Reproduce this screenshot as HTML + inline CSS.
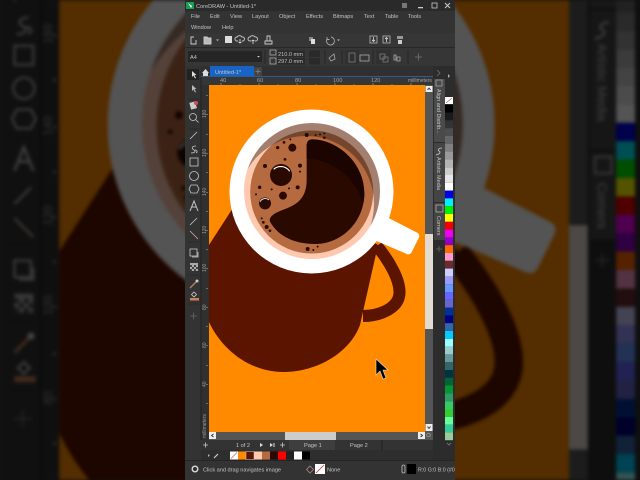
<!DOCTYPE html>
<html><head><meta charset="utf-8"><title>CoreDRAW</title>
<style>html,body{margin:0;padding:0;background:#111;width:640px;height:480px;overflow:hidden}
#w{position:absolute;left:0;top:0;width:640px;height:480px;overflow:hidden;contain:strict}
svg{display:block;overflow:hidden}
text{font-family:"Liberation Sans",sans-serif;font-size:5.6px;fill:#c4c4c4}</style></head>
<body><div id="w">
<svg xmlns="http://www.w3.org/2000/svg" width="640" height="480" viewBox="0 0 640 480">
<defs>
<filter id="b" filterUnits="userSpaceOnUse" x="0" y="0" width="640" height="480" color-interpolation-filters="sRGB"><feGaussianBlur stdDeviation="1.8"/><feComponentTransfer><feFuncR type="linear" slope=".33"/><feFuncG type="linear" slope=".33"/><feFuncB type="linear" slope=".33"/></feComponentTransfer></filter>
<filter id="s" filterUnits="userSpaceOnUse" x="185" y="0" width="270" height="480" color-interpolation-filters="sRGB"><feGaussianBlur stdDeviation="0.3"/></filter>
<clipPath id="win"><rect x="185" y="0" width="270" height="480"/></clipPath>
<clipPath id="page"><rect x="209" y="85" width="216" height="347"/></clipPath>
<clipPath id="inner"><circle cx="312" cy="191" r="68"/></clipPath>
<pattern id="bgp" patternUnits="userSpaceOnUse" x="0" y="0" width="640" height="480"><use href="#app" transform="translate(-434,-327) scale(2.36)"/></pattern>
<g id="app" clip-path="url(#win)">
<rect x="185" y="0" width="270" height="480" fill="#333"/>
<!-- title -->
<rect x="185" y="0" width="270" height="11" fill="#2a2a2a"/>
<rect x="186" y="2" width="8" height="7" fill="#15a052"/><path d="M188 3l4 3-1 2z" fill="#fff"/>
<text x="196" y="8" fill="#bbb">CoreDRAW - Untitled-1*</text>
<rect x="402" y="3" width="5" height="5" fill="#777"/><rect x="418" y="7" width="5" height="1.3" fill="#ccc"/>
<rect x="432" y="3" width="5" height="5" fill="none" stroke="#ccc" stroke-width=".8"/><path d="M445 3l5 5m0-5l-5 5" stroke="#ccc"/>
<!-- menu -->
<text x="191" y="18">File</text><text x="210" y="18">Edit</text><text x="230" y="18">View</text><text x="252" y="18">Layout</text><text x="279" y="18">Object</text><text x="306" y="18">Effects</text><text x="333" y="18">Bitmaps</text><text x="364" y="18">Text</text><text x="385" y="18">Table</text><text x="408" y="18">Tools</text>
<text x="191" y="29">Window</text><text x="222" y="29">Help</text>
<!-- toolbar -->
<rect x="185" y="33" width="270" height="14" fill="#363636"/>
<g fill="none" stroke="#ccc" stroke-width=".9">
<path d="M194 37h-3v7h5v-4"/>
<path d="M204 37h3l1 1h3v6h-7z" fill="#bbb"/>
<rect x="225" y="36" width="7" height="7" fill="#ddd" stroke="none"/>
<path d="M238 41h-1a2 2 0 0 1 0-4 3 3 0 0 1 5 0 2 2 0 0 1 1 4h-1m-2-2v4m-1.500-1l1.500 1 1.500-1"/>
<path d="M251 41h-1a2 2 0 0 1 0-4 3 3 0 0 1 5 0 2 2 0 0 1 1 4h-1m-2 3v-4m-1.500 1l1.500-1 1.500 1"/>
<path d="M265 44v-3h7v3zM267 41v-5h3v5"/>
<path d="M331 37a4 4 0 1 1-4 2m0-2v2.500h2.500" stroke="#aaa"/>
<rect x="370" y="36" width="7" height="7" stroke="#aaa"/><path d="M373.500 37v4m-1.500-1l1.500 1.500 1.500-1.500"/>
<rect x="383" y="36" width="7" height="7" stroke="#aaa"/><path d="M386.500 42v-4m-1.500 1l1.500-1.500 1.500 1.500"/>
</g>
<rect x="309" y="37" width="4" height="4" fill="#888"/><rect x="311" y="39" width="4" height="5" fill="#ddd"/>
<rect x="397" y="36" width="6" height="3" fill="#999"/><rect x="398" y="40" width="4" height="4" fill="#ccc"/>
<path d="M216 39.500h3l-1.500 1.500zM337 39.500h3l-1.500 1.500z" fill="#bbb"/>
<rect x="185" y="47" width="270" height="1" fill="#272727"/>
<!-- property bar -->
<rect x="185" y="48" width="270" height="18" fill="#363636"/>
<rect x="188" y="51" width="74" height="11" fill="#252525"/><text x="190" y="59" fill="#aaa">A4</text><path d="M257 56h3l-1.500 1.500z" fill="#ccc"/>
<g fill="none" stroke="#aaa" stroke-width=".8"><rect x="270" y="50" width="6" height="5"/><rect x="270" y="58" width="6" height="6"/>
<rect x="349" y="53" width="6" height="9" stroke="#ccc"/><rect x="360" y="55" width="9" height="6" stroke="#aaa"/>
<path d="M329 58l5-4 1 5-4 2z"/><rect x="380" y="54" width="5" height="5" stroke="#ccc"/><rect x="383" y="57" width="5" height="5" stroke="#ccc"/>
<path d="M394 60v-5h2v5zm3 1v-4h3v4z"/></g>
<rect x="277" y="50.500" width="28" height="6.500" fill="#2a2a2a"/><rect x="277" y="58" width="28" height="6.500" fill="#2a2a2a"/>
<rect x="309" y="50.500" width="11" height="6.500" fill="#2a2a2a"/><rect x="309" y="58" width="11" height="6.500" fill="#2a2a2a"/>
<text x="278" y="55.800">210.0 mm</text><text x="278" y="63.200">297.0 mm</text>
<path d="M265 50v14M325 50v14M342 50v14M373 50v14M408 50v14" stroke="#262626"/>
<rect x="345" y="50" width="14" height="14" fill="#2a2a2a" opacity=".5"/><rect x="376" y="50" width="15" height="14" fill="#2a2a2a" opacity=".5"/>
<path d="M415 57h7m-3.500-3.500v7" stroke="#666"/>
<!-- tabs -->
<rect x="185" y="66" width="270" height="11" fill="#303030"/>
<path d="M202 73l3.500-4 3.500 4h-1v3h-5v-3z" fill="#ddd"/>
<rect x="210" y="66" width="44" height="10.500" fill="#1763c6"/><text x="215" y="74" fill="#9fd0ff">Untitled-1*</text>
<rect x="254" y="67" width="8" height="9" fill="#444"/><path d="M255.500 71.500h5m-2.500-2.500v5" stroke="#777"/>
<rect x="201" y="76" width="232" height=".8" fill="#2a6aa5"/>
<!-- top ruler -->
<rect x="201" y="77" width="232" height="8" fill="#363636"/>
<g opacity=".75"><text x="220" y="82">40</text><text x="257" y="82">60</text><text x="295" y="82">80</text><text x="333" y="82">100</text><text x="371" y="82">120</text><text x="408" y="82" style="font-size:5px">millimeters</text></g>
<path d="M221 83v2M240 84v1M259 83v2M278 84v1M297 83v2M316 84v1M335 83v2M354 84v1M373 83v2M392 84v1M411 83v2" stroke="#aaa" stroke-width=".6"/>
<!-- left toolbox -->
<rect x="185" y="66" width="16" height="394" fill="#333"/>
<rect x="201" y="85" width="8" height="355" fill="#303030"/>
<path d="M201 77v363" stroke="#1c1c1c" stroke-width=".8"/>
<g fill="none" stroke="#c8c8c8" stroke-width=".8">
<rect x="187" y="69" width="12" height="11" fill="#222" stroke="none"/>
<path d="M192 71v6l1.500-1.500 1.500 3 1-.5-1.500-3h2z" fill="#ddd" stroke="none"/>
<path d="M192 85v6l1.500-1.500 1.500 3 1-.5-1.500-3h2z" fill="#bbb" stroke="none"/>
<rect x="190" y="102" width="6" height="7" fill="#ccc" stroke="none" transform="rotate(-15 193 105)"/><circle cx="196" cy="103" r="2" fill="#e0465a" stroke="none"/>
<circle cx="193" cy="117" r="3.500"/><path d="M195.500 119.500l3 3"/>
<path d="M190 139l7-7"/>
<path d="M191 153c4 0 5-2 3-3-3-2-2-4 2-4" /><path d="M196 153c2-1 1-3-1-3" />
<rect x="190" y="158" width="8" height="8"/>
<circle cx="194" cy="176" r="4.500"/>
<path d="M191 185h6l2 4-2 4h-6l-2-4z"/>
<path d="M190 211l4-10 4 10M191.500 207h5" stroke-width="1"/>
<path d="M190 225l7-7"/>
<path d="M190 231l8 8" stroke="#d8b0a0"/>
<rect x="190" y="249" width="7" height="7"/><path d="M198 252v5h-6" />
</g>
<rect x="190" y="263" width="8" height="8" fill="#aaa"/>
<path d="M190 265h2v2h-2zM194 265h2v2h-2zM192 267h2v2h-2zM196 267h2v2h-2zM190 269h2v2h-2zM194 269h2v2h-2z" fill="#444"/>
<path d="M190 288l6-6" stroke="#b97a5a" stroke-width="1.400"/><circle cx="197" cy="281" r="1.500" fill="#ccc"/>
<path d="M194 292l2.500 2.500-2.500 2.500-2.500-2.500z" fill="none" stroke="#ccc" stroke-width=".8"/><rect x="190" y="298" width="9" height="2.500" fill="#c9805a"/>
<path d="M190 316h7m-3.500-3.500v7" stroke="#666" stroke-width=".8"/>
<path d="M188 99h11M188 129h11M188 197h11M188 242h11M188 275h11M188 304h11" stroke="#272727" stroke-width=".7"/>
<!-- ruler left -->
<g opacity=".7">
<text transform="translate(206,118) rotate(-90)" style="font-size:5px">180</text><text transform="translate(206,157) rotate(-90)" style="font-size:5px">160</text><text transform="translate(206,196) rotate(-90)" style="font-size:5px">140</text><text transform="translate(206,234) rotate(-90)" style="font-size:5px">120</text><text transform="translate(206,272) rotate(-90)" style="font-size:5px">100</text><text transform="translate(206,310) rotate(-90)" style="font-size:5px">80</text><text transform="translate(206,348) rotate(-90)" style="font-size:5px">60</text><text transform="translate(206,387) rotate(-90)" style="font-size:5px">40</text>
<text transform="translate(206,438) rotate(-90)" style="font-size:5px">millimeters</text>
</g>
<path d="M207 95v1M207 114v1M207 134v1M207 153v1M207 172v1M207 192v1M207 211v1M207 230v1M207 249v1M207 268v1M207 288v1M207 307v1M207 326v1M207 345v1M207 365v1M207 384v1M207 403v1" stroke="#999" stroke-width="1.200"/>
<!-- workspace + page -->
<rect x="209" y="85" width="216" height="347" fill="#ff8a00"/>
<g clip-path="url(#page)">
<path d="M240 197L209 245L200 300L209 322C222 350 250 372 283 372C318 372 350 352 360 325L378 245L340 220Z" fill="#5a1400"/>
<path d="M377 246C390 262 400 280 399.500 293C399 308 380 316 363 316" fill="none" stroke="#5a1400" stroke-width="12"/>
<g transform="translate(225,100) scale(.33333)">
<polygon points="482,362 572,408 550,452 452,410" fill="#fff" stroke="#fff" stroke-width="22" stroke-linejoin="round"/>
</g>
<circle cx="311.500" cy="191.500" r="82" fill="#fff"/>
<circle cx="312" cy="191" r="68" fill="#ffc9b0"/>
<circle cx="311.700" cy="192" r="61.500" fill="#b56a40"/>
<g clip-path="url(#inner)"><path fill-rule="evenodd" d="M230 110h170v170h-170zM306 204m-68 0a68 68 0 1 0 136 0a68 68 0 1 0-136 0z" fill="#1a1210" opacity=".4"/></g>
<g transform="translate(225,100) scale(.33333)">
<path d="M262 118C340 120 418 190 418 280C418 365 350 432 270 432C210 432 160 410 135 365C130 345 160 335 185 325C225 310 245 285 245 240L245 140C245 125 250 118 262 118Z" fill="#2a0900"/>
<path d="M262 118C340 120 418 190 418 280C418 290 417 300 415 310C390 230 320 180 245 175L245 140C245 125 250 118 262 118Z" fill="#1c0500"/>
<g fill="#2a0900">
<circle cx="168" cy="225" r="33"/><circle cx="120" cy="310" r="18"/><circle cx="174" cy="287" r="12"/><circle cx="202" cy="143" r="12"/>
<circle cx="158" cy="143" r="5"/><circle cx="177" cy="127" r="4"/><circle cx="196" cy="118" r="3"/><circle cx="245" cy="105" r="6"/><circle cx="272" cy="105" r="3"/><circle cx="285" cy="103" r="3"/><circle cx="298" cy="100" r="3"/><circle cx="298" cy="113" r="4"/>
<circle cx="120" cy="198" r="6"/><circle cx="180" cy="178" r="4"/><circle cx="225" cy="197" r="6"/><circle cx="225" cy="215" r="3"/><circle cx="218" cy="262" r="6"/><circle cx="192" cy="265" r="3"/><circle cx="140" cy="268" r="3"/><circle cx="104" cy="262" r="5"/><circle cx="93" cy="283" r="3"/>
<circle cx="110" cy="355" r="3"/><circle cx="115" cy="367" r="4"/><circle cx="125" cy="381" r="6"/><circle cx="135" cy="392" r="4"/><circle cx="248" cy="447" r="6"/><circle cx="265" cy="450" r="3"/><circle cx="278" cy="440" r="3"/>
</g>
<path d="M146 208C158 196 182 196 194 214" fill="none" stroke="#fff" stroke-width="3.500"/>
<path d="M105 305C112 294 124 293 132 300" fill="none" stroke="#fff" stroke-width="2.500"/>
</g>
<path d="M376 359L376 375L380 371L383 379L386 378L383 370L388 370Z" fill="#000" stroke="#ddd" stroke-width=".6"/>
</g>
<!-- vertical scrollbar -->
<rect x="425" y="85" width="8" height="347" fill="#555"/>
<rect x="425" y="234" width="8" height="95" fill="#e4dcd2"/>
<rect x="425.500" y="86" width="7" height="6" fill="#eee"/><path d="M427.500 90l1.500-2 1.500 2" fill="none" stroke="#222" stroke-width=".8"/>
<rect x="425.500" y="424" width="7" height="7" fill="#eee"/><path d="M427.500 426.500l1.500 2 1.500-2" fill="none" stroke="#222" stroke-width=".8"/>
<!-- horizontal scrollbar -->
<rect x="209" y="432" width="224" height="8" fill="#555"/>
<rect x="285" y="432" width="51" height="8" fill="#ccc"/>
<rect x="209" y="432" width="7" height="7" fill="#eee"/><path d="M213.500 434l-2 1.500 2 1.500" fill="none" stroke="#222" stroke-width=".8"/>
<rect x="418" y="432" width="7" height="7" fill="#eee"/><path d="M420.500 434l2 1.500-2 1.500" fill="none" stroke="#222" stroke-width=".8"/>
<circle cx="428.500" cy="435" r="1.800" fill="none" stroke="#aaa" stroke-width=".7"/>
<!-- page nav -->
<rect x="201" y="440" width="233" height="10" fill="#333"/>
<path d="M203 445h5m-2.500-2.500v5M280 445h5m-2.500-2.500v5" stroke="#ccc" stroke-width=".8"/>
<text x="236" y="447">1 of 2</text>
<path d="M260 443v4l3-2zM270 443v4l3-2z" fill="#ddd"/><path d="M274 443v4" stroke="#ddd"/>
<rect x="289" y="440" width="46" height="10" fill="#3e3e3e"/><text x="304" y="447">Page 1</text><text x="350" y="447">Page 2</text>
<path d="M382 440v10" stroke="#222"/>
<!-- doc palette -->
<rect x="201" y="450" width="233" height="10" fill="#2e2e2e"/>
<path d="M208 454v3l2-1.500z" fill="#aaa"/><path d="M214 458l4-4" stroke="#ccc" stroke-width="1.200"/>
<rect x="230" y="451.500" width="8" height="8" fill="#fff"/><path d="M231 458.500l6-6" stroke="#c05050" stroke-width=".6"/>
<rect x="238" y="451.500" width="8" height="8" fill="#ff8a00"/>
<rect x="246" y="451.500" width="8" height="8" fill="#5a1400" stroke="#ccc" stroke-width=".5"/>
<rect x="254" y="451.500" width="8" height="8" fill="#ffc9b0"/>
<rect x="262" y="451.500" width="8" height="8" fill="#b56a40"/>
<rect x="270" y="451.500" width="8" height="8" fill="#2a0900"/>
<rect x="278" y="451.500" width="8" height="8" fill="#f00"/>
<rect x="286" y="451.500" width="8" height="8" fill="#222"/>
<rect x="294" y="451.500" width="8" height="8" fill="#fff"/>
<rect x="302" y="451.500" width="8" height="8" fill="#000"/>
<!-- status bar -->
<rect x="185" y="460" width="270" height="20" fill="#333"/>
<rect x="185" y="460" width="270" height=".8" fill="#222"/>
<circle cx="195" cy="469" r="2.800" fill="none" stroke="#ddd" stroke-width="1.400"/>
<text x="203" y="471.500">Click and drag navigates image</text>
<path d="M310 466l3.500 3.500-3.500 3.500-3.500-3.500z" fill="none" stroke="#a88" stroke-width=".8"/>
<rect x="315" y="464" width="10" height="10" fill="#fff"/><path d="M316 473l8-8" stroke="#b33" stroke-width=".8"/>
<text x="327" y="471.500">None</text>
<rect x="402" y="465" width="3" height="8" rx="1.500" fill="none" stroke="#bbb" stroke-width=".8"/>
<rect x="407" y="464" width="9" height="10" fill="#000"/>
<text x="418" y="471.500" style="font-size:5.300px">R:0 G:0 B:0 (#0</text>
<!-- dockers -->
<rect x="433" y="66" width="22" height="394" fill="#2c2c2c"/>
<path d="M438 70l3 3-3 3" fill="none" stroke="#777" stroke-width=".7" transform="translate(-1,0)"/>
<rect x="434" y="79" width="11" height="63" fill="#4a4a4a"/>
<rect x="434" y="143" width="11" height="59" fill="#444"/>
<rect x="434" y="203" width="11" height="37" fill="#444"/>
<rect x="436" y="80" width="6" height="6" fill="none" stroke="#aaa" stroke-width=".7"/>
<path d="M436 155c4-1 5-3 3-4-2-1 0-3 3-3" fill="none" stroke="#ccc" stroke-width=".8"/>
<rect x="436" y="205" width="7" height="7" fill="none" stroke="#bbb" stroke-width=".7"/>
<text transform="translate(437,89) rotate(90)" style="font-size:5.500px">Align and Distrib...</text>
<text transform="translate(437,157) rotate(90)" style="font-size:5.500px">Artistic Media</text>
<text transform="translate(437,216) rotate(90)" style="font-size:5.500px">Corners</text>
<path d="M436 249h6m-3-3v6" stroke="#666" stroke-width=".8"/>
<path d="M448 74l2 2-2 2z" fill="#aaa"/>
<!-- palette -->
<rect x="445" y="97" width="8" height="7" fill="#fff"/><path d="M446 103l6-5" stroke="#c05050" stroke-width=".6"/>
<rect x="445" y="104.800" width="8" height="7.800" fill="#000"/><rect x="445" y="112.600" width="8" height="7.800" fill="#1a1a1a"/><rect x="445" y="120.400" width="8" height="7.800" fill="#333"/><rect x="445" y="128.200" width="8" height="7.800" fill="#4d4d4d"/><rect x="445" y="136" width="8" height="7.800" fill="#666"/><rect x="445" y="143.800" width="8" height="7.800" fill="#808080"/><rect x="445" y="151.600" width="8" height="7.800" fill="#999"/><rect x="445" y="159.400" width="8" height="7.800" fill="#b3b3b3"/><rect x="445" y="167.200" width="8" height="7.800" fill="#ccc"/><rect x="445" y="175" width="8" height="7.800" fill="#e6e6e6"/><rect x="445" y="182.800" width="8" height="7.800" fill="#fff"/>
<rect x="445" y="190.600" width="8" height="7.800" fill="#0000e6"/><rect x="445" y="198.400" width="8" height="7.800" fill="#00f0ff"/><rect x="445" y="206.200" width="8" height="7.800" fill="#00ee00"/><rect x="445" y="214" width="8" height="7.800" fill="#ffff00"/><rect x="445" y="221.800" width="8" height="7.800" fill="#f00000"/><rect x="445" y="229.600" width="8" height="7.800" fill="#f000f0"/><rect x="445" y="237.400" width="8" height="7.800" fill="#9000c8"/><rect x="445" y="245.200" width="8" height="7.800" fill="#ff6a00"/><rect x="445" y="253" width="8" height="7.800" fill="#ff9acb"/><rect x="445" y="260.800" width="8" height="7.800" fill="#6a2a2e"/>
<rect x="445" y="268.600" width="8" height="7.800" fill="#ccccff"/><rect x="445" y="276.400" width="8" height="7.800" fill="#9a9aff"/><rect x="445" y="284.200" width="8" height="7.800" fill="#6699ff"/><rect x="445" y="292" width="8" height="7.800" fill="#6666ff"/><rect x="445" y="299.800" width="8" height="7.800" fill="#6666cc"/><rect x="445" y="307.600" width="8" height="7.800" fill="#003399"/><rect x="445" y="315.400" width="8" height="7.800" fill="#000080"/><rect x="445" y="323.200" width="8" height="7.800" fill="#3366aa"/><rect x="445" y="331" width="8" height="7.800" fill="#00ccff"/><rect x="445" y="338.800" width="8" height="7.800" fill="#99ffff"/><rect x="445" y="346.600" width="8" height="7.800" fill="#99cccc"/><rect x="445" y="354.400" width="8" height="7.800" fill="#669999"/><rect x="445" y="362.200" width="8" height="7.800" fill="#336666"/><rect x="445" y="370" width="8" height="7.800" fill="#003344"/><rect x="445" y="377.800" width="8" height="7.800" fill="#006633"/><rect x="445" y="385.600" width="8" height="7.800" fill="#009933"/><rect x="445" y="393.400" width="8" height="7.800" fill="#339966"/><rect x="445" y="401.200" width="8" height="7.800" fill="#33cc66"/><rect x="445" y="409" width="8" height="7.800" fill="#33cc33"/><rect x="445" y="416.800" width="8" height="7.800" fill="#66ff99"/><rect x="445" y="424.600" width="8" height="7.800" fill="#33cc99"/><rect x="445" y="432.400" width="8" height="7.800" fill="#99cc99"/>
<path d="M447 443l2 2 2-2" fill="none" stroke="#888" stroke-width=".7"/>
</g>
</defs>
<rect width="640" height="480" fill="#111"/>
<rect x="0" y="0" width="640" height="480" fill="url(#bgp)" filter="url(#b)"/>
<g filter="url(#s)"><use href="#app"/></g>
</svg>
</div></body></html>
